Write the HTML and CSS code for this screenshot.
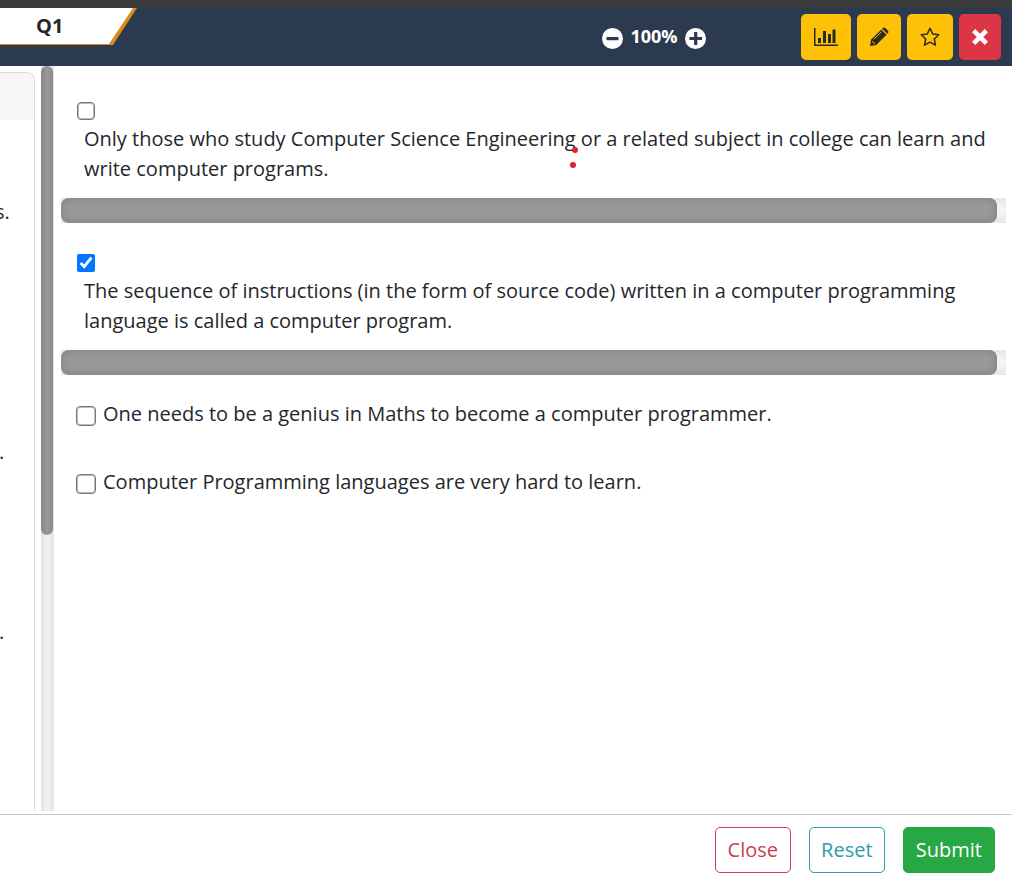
FILE: index.html
```html
<!DOCTYPE html>
<html lang="en">
<head>
<meta charset="utf-8">
<meta name="viewport" content="width=device-width, initial-scale=1">
<title>Q1</title>
<link rel="stylesheet" href="styles.css">
</head>
<body>
<header class="topbar">
  <div class="tab">
    <svg class="tab-shape" width="137" height="38" viewBox="0 0 137 38" aria-hidden="true"><path d="M0 0H137L113 37H0Z" fill="#dc8a1c"/><path d="M0 0H133L109 36H0Z" fill="#fff"/></svg>
    <h1 class="tab-label">Q1</h1>
  </div>
  <div class="zoom">
    <button class="zoom-btn" type="button" aria-label="Zoom out"><svg width="21" height="21" viewBox="0 0 21 21"><circle cx="10.500" cy="10.500" r="10.500" fill="#fff"/><rect x="4.500" y="9" width="12" height="3.200" rx=".6" fill="#2c3a50"/></svg></button>
    <span class="zoom-value">100%</span>
    <button class="zoom-btn" type="button" aria-label="Zoom in"><svg width="21" height="21" viewBox="0 0 21 21"><circle cx="10.500" cy="10.500" r="10.500" fill="#fff"/><path d="M6 10.500h9.500M10.700 5.500v10" stroke="#2c3a50" stroke-width="3.200" stroke-linecap="square"/></svg></button>
  </div>
  <div class="tools">
    <button class="tool tool-chart" type="button" aria-label="Statistics"><svg width="24" height="20" viewBox="0 0 24 20" fill="#2b2a20"><path d="M0 1h1.500v16.500H24V19H0zM4 11h3v5H4zM9 4h3v12H9zM14 7h3v9h-3zM18.500 2.500h3V16h-3z"/></svg></button>
    <button class="tool tool-edit" type="button" aria-label="Edit"><svg width="20" height="20" viewBox="0 0 20 20"><path d="M1 19l1-6.200L12.300 2.500l5.200 5.200L7.200 18z" fill="#2b2a20"/><path d="M13.200 1.700l.7-.7q1.200-1 2.400 0l2.700 2.700q1 1.200 0 2.400l-.7.700z" fill="#2b2a20"/><path d="M5 12.200l7.500-7.500M3 14.200L6 17" stroke="#ffc107" stroke-width="1" fill="none"/></svg></button>
    <button class="tool tool-star" type="button" aria-label="Favourite"><svg width="20" height="20" viewBox="0 0 20 20"><path d="M10 1.200l2.700 5.700 6.100.8-4.500 4.300 1.200 6.200-5.500-3-5.500 3 1.200-6.200L1.200 7.700l6.100-.8z" fill="none" stroke="#2b2a20" stroke-width="1.500" stroke-linejoin="round"/></svg></button>
    <button class="tool tool-exit" type="button" aria-label="Exit"><svg width="16" height="16" viewBox="0 0 16 16"><path d="M3.300 3.300l9.400 9.400M12.700 3.300l-9.400 9.400" stroke="#fff" stroke-width="4.600" stroke-linecap="square" stroke-linejoin="round"/></svg></button>
  </div>
</header>
<main class="panes">
  <section class="question">
    <div class="card">
      <div class="card-head"></div>
      <div class="card-body">
        <p class="para">s.</p>
        <p class="para">.</p>
        <p class="para">.</p>
      </div>
    </div>
  </section>
  <div class="vtrack"><div class="vthumb"></div></div>
  <form class="answers" id="answers">
    <div class="option">
      <input class="check" type="checkbox" id="a1">
      <label class="option-text" for="a1">Only those who study Computer Science Engineering or a related subject in college can learn and write computer programs.</label>
      <svg class="marks" width="10" height="24" viewBox="0 0 10 24" aria-hidden="true"><circle cx="6" cy="4" r="3" fill="#e0202a"/><circle cx="4" cy="19" r="3" fill="#e0202a"/></svg>
    </div>
    <div class="htrack"><div class="hthumb"></div></div>
    <div class="option option-next">
      <input class="check" type="checkbox" id="a2" checked>
      <label class="option-text" for="a2">The sequence of instructions (in the form of source code) written in a computer programming language is called a computer program.</label>
    </div>
    <div class="htrack"><div class="hthumb"></div></div>
    <div class="row">
      <input class="check" type="checkbox" id="a3">
      <label for="a3">One needs to be a genius in Maths to become a computer programmer.</label>
    </div>
    <div class="row">
      <input class="check" type="checkbox" id="a4">
      <label for="a4">Computer Programming languages are very hard to learn.</label>
    </div>
  </form>
</main>
<footer class="actions">
  <button class="btn btn-close" type="button">Close</button>
  <button class="btn btn-reset" type="reset" form="answers">Reset</button>
  <button class="btn btn-submit" type="submit" form="answers">Submit</button>
</footer>
</body>
</html>
```
FILE: styles.css
```css
* { box-sizing: border-box; }
body {
  margin: 0;
  min-height: 100vh;
  display: flex;
  flex-direction: column;
  background: #fff;
  color: #24282c;
  font: 20px/30px "Open Sans", "Noto Sans", sans-serif;
  overflow-x: hidden;
}
button { font: inherit; cursor: pointer; }
.topbar {
  height: 66px;
  border-top: 8px solid #3c3c3c;
  background: #2c3a50;
  display: grid;
  grid-template-columns: 1fr auto 1fr;
  align-items: start;
  padding-right: 11px;
}
.tab { display: grid; justify-self: start; }
.tab > * { grid-area: 1 / 1; }
.tab-label {
  margin: 0;
  padding: 3px 0 0 36px;
  font-size: 20px;
  line-height: 30px;
  font-weight: 700;
}
.zoom {
  display: flex;
  align-items: center;
  gap: 7px;
  padding-top: 15px;
  margin-left: 307px;
  color: #fff;
}
.zoom-btn {
  border: 0;
  padding: 4px 0 0;
  background: none;
  display: flex;
}
.zoom-value { font-size: 18px; line-height: 26px; font-weight: 700; }
.tools {
  display: flex;
  justify-content: flex-end;
  gap: 6px;
  padding-top: 6px;
}
.tool {
  height: 46px;
  width: 46px;
  padding: 0;
  border: 0;
  border-radius: 5px;
  background: #ffc107;
  display: flex;
  align-items: center;
  justify-content: center;
}
.tool-chart { width: 50px; }
.tool-edit { width: 44px; }
.tool-exit { width: 42px; background: #dc3545; }
.panes { flex: 1; display: flex; }
.question {
  width: 41px;
  flex: none;
  padding: 6px 6px 3px 0;
  overflow: hidden;
  display: flex;
}
.card {
  flex: 1;
  border: solid #d9dbde;
  border-width: 1px 1px 0 0;
  border-top-right-radius: 8px;
  overflow: hidden;
}
.card-head { height: 47px; background: #f6f6f6; }
.card-body { padding-top: 77px; }
.para { margin: 0 0 0 -5px; }
.para + .para { margin-top: 210px; margin-left: -1px; }
.para + .para + .para { margin-top: 150px; }
.vtrack {
  width: 13px;
  flex: none;
  margin-bottom: 3px;
  background: linear-gradient(90deg, #e2e2e2, #f3f3f3 50%, #e4e4e4);
}
.vthumb {
  width: 12px;
  height: 63%;
  border-radius: 6px;
  background: linear-gradient(90deg, #858585, #999 50%, #8b8b8b);
}
.answers { flex: 1; min-width: 0; padding: 36px 6px 24px 7px; }
.option { position: relative; padding: 0 0 14px 16px; }
.option-next { margin-top: 31px; }
.option-text { display: block; padding: 4px 12px 0 7px; }
.check { display: block; width: 18px; height: 18px; margin: 0; accent-color: #0075ff; flex: none; }
.check:not(:checked) {
  appearance: none;
  border: 1px solid #767676;
  border-radius: 4px;
  box-shadow: inset 0 0 0 1px #bbb;
}
.marks { position: absolute; left: 508px; top: 44px; }
.htrack {
  height: 25px;
  background: linear-gradient(#e6e6e6, #f6f6f6 50%, #e6e6e6);
}
.hthumb {
  width: 99%;
  height: 25px;
  border-radius: 8px;
  background: #999;
  box-shadow: inset 0 0 8px #7d7d7d;
}
.row { display: flex; align-items: center; gap: 7px; padding-left: 15px; margin-top: 38px; }
.row .check { width: 20px; height: 20px; margin-top: 4px; }
.htrack + .row { margin-top: 24px; }
.actions {
  border-top: 1px solid #c6c7c8;
  padding: 12px 17px;
  display: flex;
  justify-content: flex-end;
  gap: 18px;
}
.btn {
  height: 46px;
  min-width: 76px;
  padding: 0 11px;
  border: 1px solid;
  border-radius: 5px;
  background: #fff;
  font-size: 20px;
}
.btn-close { color: #c8404f; border-color: #c8404f; }
.btn-reset { color: #2f9bab; border-color: #2f9bab; }
.btn-submit { padding: 0 12px; color: #fff; background: #28a745; border-color: #28a745; }
```
